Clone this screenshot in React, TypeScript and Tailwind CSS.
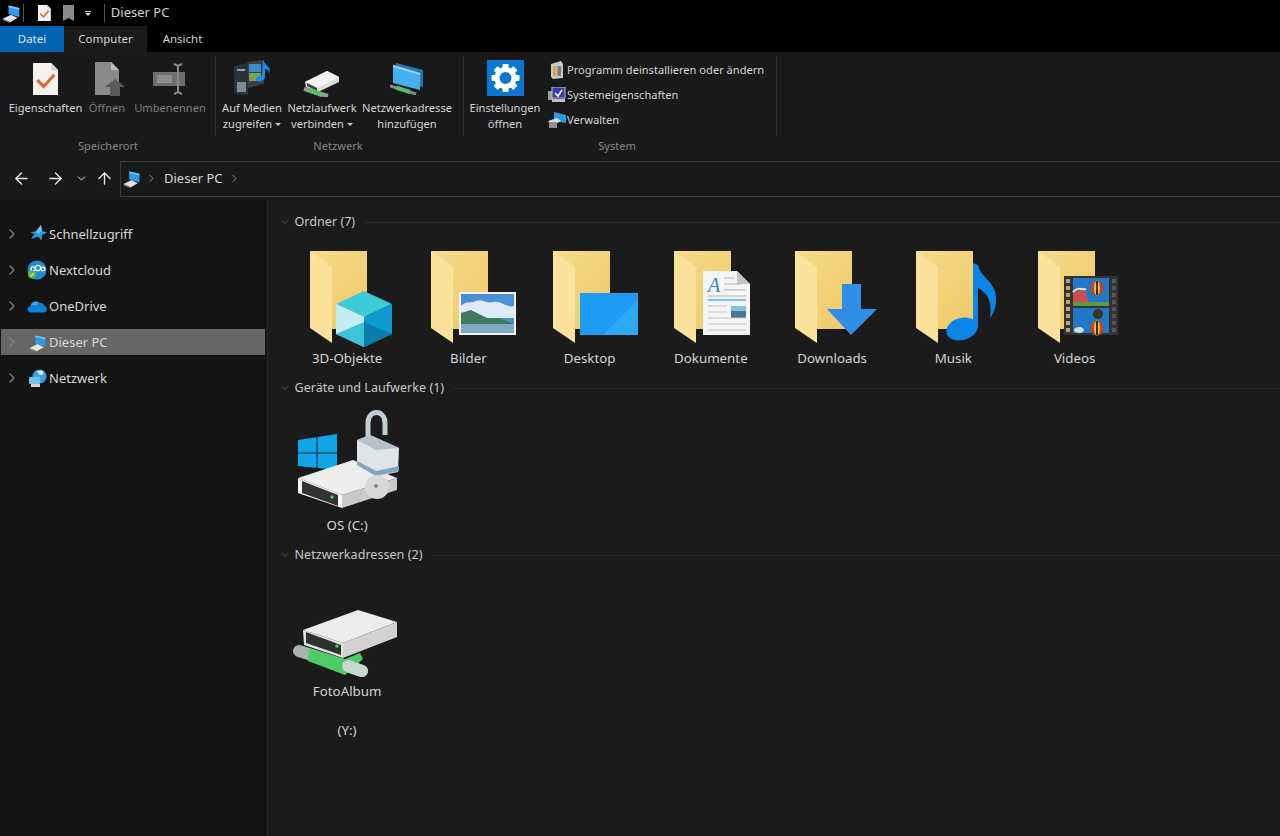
import { ArrowLeft, ArrowRight, ArrowUp, ChevronDown, ChevronRight } from 'lucide-react'
import type { ReactNode } from 'react'

function PcIcon({ size = 22 }: { size?: number }) {
  return (
    <svg width={size} height={size} viewBox="0 0 24 24">
      <polygon points="9,3 22,6 22,17 9,13" fill="#2f9be8" />
      <polygon points="9,3 22,6 22,8 9,5" fill="#7cc7f5" />
      <polygon points="2,19 12,14 20,18 11,23" fill="#e2e2e2" />
      <polygon points="2,19 11,23 11,24 2,20.5" fill="#8f8f8f" />
    </svg>
  )
}

function FileCheckIcon({ size = 32 }: { size?: number }) {
  return (
    <svg width={size * 0.8} height={size} viewBox="0 0 24 30">
      <polygon points="0,0 17,0 24,7 24,30 0,30" fill="#f6f3ee" />
      <polygon points="17,0 24,7 17,7" fill="#d4d4d4" />
      <polyline points="4,16 10,22 20,11" fill="none" stroke="#dd6b33" strokeWidth="3" />
    </svg>
  )
}

function OpenFileIcon() {
  return (
    <svg width="30" height="34" viewBox="0 0 30 34" className="ml-[6px]">
      <polygon points="0,0 16,0 24,8 24,33 0,33" fill="#8a8a8a" />
      <polygon points="16,0 24,8 16,8" fill="#bcbcbc" />
      <polygon points="20,17 30,25 25,25 25,34 15,34 15,25 10,25" fill="#5b5b5b" />
    </svg>
  )
}

function RenameIcon() {
  return (
    <svg width="34" height="32" viewBox="0 0 34 32">
      <rect x="0" y="9" width="32" height="14" fill="#6e6e6e" />
      <rect x="4" y="12" width="15" height="8" fill="#8d8d8d" />
      <path d="M21 1 L25 3 L29 1 M25 3 V29 M21 31 L25 29 L29 31" fill="none" stroke="#8a8a8a" strokeWidth="2" />
    </svg>
  )
}

function MediaIcon() {
  return (
    <svg width="38" height="36" viewBox="0 0 38 36" className="ml-[2px] mt-[-2px]">
      <polygon points="0,6 14,3 14,35 4,35 0,32" fill="#2c3238" />
      <rect x="3" y="9" width="8" height="2" fill="#8fa3b5" />
      <rect x="3" y="22" width="9" height="10" fill="#7f8b97" />
      <polygon points="12,2 30,0 30,24 14,28 14,3" fill="#3a3f44" />
      <rect x="15" y="4" width="12" height="8" fill="#3b8bd1" />
      <rect x="15" y="13" width="12" height="8" fill="#7da653" />
      <path d="M29 0 C31 6 38 6 35 14 C35 10 33 9 31 9 L31 17 C31 21 24 23 22 20 C21 17 25 15 28 16 Z" fill="#1b8fe8" />
    </svg>
  )
}

function SmallNetDrive() {
  return (
    <svg width="38" height="28" viewBox="0 0 38 28" className="mt-[7px]">
      <polygon points="2,13 24,2 36,8 36,13 15,23 3,18" fill="#dcdcdc" />
      <polygon points="2,13 15,19 36,8 24,2" fill="#f2f2f2" />
      <polygon points="4,14 14,19 14,22 4,17" fill="#3d3d3d" />
      <line x1="1" y1="20" x2="25" y2="27" stroke="#9a9a9a" strokeWidth="4" />
      <line x1="6" y1="21" x2="20" y2="26" stroke="#55c267" strokeWidth="5" />
    </svg>
  )
}

function NetAddressIcon() {
  return (
    <svg width="36" height="32" viewBox="0 0 36 32" className="ml-[2px]">
      <polygon points="6,0 33,7 33,24 6,17" fill="#2878b8" />
      <polygon points="3,2 30,10 30,27 3,20" fill="#45b0f0" />
      <polygon points="3,2 30,10 30,12 3,4" fill="#9ed8fa" />
      <line x1="0" y1="23" x2="26" y2="31" stroke="#8a8a8a" strokeWidth="3" />
      <line x1="6" y1="24.5" x2="20" y2="29" stroke="#55c267" strokeWidth="4" />
    </svg>
  )
}

function SettingsIcon() {
  return (
    <svg width="37" height="36" viewBox="0 0 37 36" className="mt-[-2px]">
      <rect width="37" height="36" fill="#0a78d0" />
      <g fill="#fff">
        {[0, 45, 90, 135, 180, 225, 270, 315].map((a) => (
          <rect key={a} x="15.5" y="4" width="6" height="7" rx="1" transform={`rotate(${a} 18.5 18)`} />
        ))}
      </g>
      <circle cx="18.5" cy="18" r="8.5" fill="none" stroke="#fff" strokeWidth="5" />
    </svg>
  )
}

function ProgramIcon() {
  return (
    <svg width="16" height="18" viewBox="0 0 16 18">
      <polygon points="2,3 12,0 14,3 14,17 4,18 2,16" fill="#c9c9c9" />
      <rect x="4" y="5" width="3.5" height="10" fill="#e3a04f" />
      <rect x="8.5" y="5" width="3.5" height="10" fill="#6f7b88" />
    </svg>
  )
}

function SysPropsIcon() {
  return (
    <svg width="18" height="16" viewBox="0 0 18 16">
      <rect x="0" y="4" width="5" height="9" fill="#a0a0a0" />
      <rect x="4" y="0" width="13" height="11" fill="#2f3fa8" stroke="#c5c5c5" />
      <polyline points="7,6 10,9 14,3" fill="none" stroke="#fff" strokeWidth="1.5" />
      <rect x="4" y="12" width="13" height="3" fill="#c0c0c0" />
    </svg>
  )
}

function ManageIcon() {
  return (
    <svg width="19" height="16" viewBox="0 0 19 16">
      <polygon points="6,0 18,3 18,11 6,9" fill="#2f9be8" />
      <polygon points="0,9 9,6 13,9 4,14" fill="#d8d8d8" />
      <rect x="1" y="10" width="8" height="6" fill="#8f8f8f" />
    </svg>
  )
}

function StarIcon() {
  return (
    <svg width="18" height="18" viewBox="0 0 18 18">
      <polygon points="12,0 13,6 18,7.5 13,10 12.5,15.5 9,11.5 2,14 5.5,9 1,7 7,6.5" fill="#2b9be8" />
      <polygon points="12,0 13,6 9,9 7,6.5" fill="#72c1f3" />
    </svg>
  )
}

function NextcloudIcon() {
  return (
    <svg width="20" height="20" viewBox="0 0 20 20">
      <circle cx="10" cy="10" r="9.5" fill="#1d8fd6" />
      <circle cx="6" cy="9" r="2.2" fill="none" stroke="#fff" strokeWidth="1.2" />
      <circle cx="11" cy="8" r="2.6" fill="none" stroke="#fff" strokeWidth="1.2" />
      <circle cx="16" cy="9" r="1.8" fill="none" stroke="#fff" strokeWidth="1.2" />
      <circle cx="5" cy="14.5" r="4" fill="#63b33c" />
      <polyline points="3,14.5 4.6,16 7,13" fill="none" stroke="#fff" strokeWidth="1" />
    </svg>
  )
}

function OneDriveIcon() {
  return (
    <svg width="20" height="14" viewBox="0 0 20 14">
      <path d="M4 13.5 C0 13.5 -1 8 3.5 7 C4.5 2.5 9.5 1 12.5 4 C15 3 17 5 17 6.5 C20.5 7 21 13.5 17 13.5 Z" fill="#0f7fd8" />
      <path d="M3.5 7 C4.5 2.5 9.5 1 12.5 4 C11 4.5 10 5.5 9.5 6.5 C7.5 5.5 5 6 3.5 7 Z" fill="#36a4ee" />
    </svg>
  )
}

function GlobeIcon() {
  return (
    <svg width="18" height="18" viewBox="0 0 18 18">
      <circle cx="10.5" cy="7.5" r="7" fill="#3f9fe4" />
      <path d="M7 2 C10 3 9 6 12 6 C15 6 15 3 13 1.5 Z" fill="#cfe9fa" />
      <rect x="0" y="8" width="11" height="7" rx="1" fill="#75c0ef" />
      <rect x="2" y="15" width="9" height="3" fill="#d5d5d5" />
    </svg>
  )
}

function Folder() {
  return (
    <>
      <defs>
        <linearGradient id="folderBack" x1="0" y1="0" x2="1" y2="1">
          <stop offset="0" stopColor="#f6dc8c" />
          <stop offset="1" stopColor="#eec866" />
        </linearGradient>
      </defs>
      <polygon points="10,1 67,1 67,79 32,79" fill="url(#folderBack)" />
      <polygon points="10,1 32,17 32,93 10,78" fill="#fde29b" />
    </>
  )
}

function Cube() {
  return (
    <>
      <polygon points="64,41 92,54 64,67 36,54" fill="#3dcbd8" />
      <polygon points="36,54 64,67 64,97 36,84" fill="#c5eef3" />
      <polygon points="92,54 64,67 64,97 92,84" fill="#0d9bd2" />
      <polygon points="36,84 64,72 64,97" fill="#3cc4d6" />
      <polygon points="92,84 64,72 64,97" fill="#0a7cae" />
    </>
  )
}

function Picture() {
  return (
    <>
      <rect x="38" y="42" width="57" height="43" fill="#f2f2f2" />
      <rect x="40" y="44" width="53" height="39" fill="#4a90d4" />
      <path d="M40 56 C46 50 50 54 55 51 C60 48 66 54 72 52 C80 50 86 58 93 56 V68 H40 Z" fill="#dcebf5" />
      <polygon points="40,63 50,60 66,68 78,68 93,74 40,74" fill="#3f7a5c" />
      <rect x="40" y="74" width="53" height="9" fill="#7fa8c4" />
    </>
  )
}

function Desktop() {
  return (
    <>
      <rect x="37" y="43" width="58" height="42" fill="#1e9bf5" />
      <polygon points="60,85 95,50 95,85" fill="#2fa8f8" />
    </>
  )
}

function DocumentOverlay() {
  return (
    <>
      <polygon points="39,21 73,21 86,34 86,85 39,85" fill="#f5f5f5" />
      <polygon points="73,21 86,34 73,34" fill="#c6c6c6" />
      <text x="44" y="42" fontFamily="Liberation Serif, serif" fontStyle="italic" fontSize="20" fill="#3a83c8">A</text>
      <path d="M60 28 H71 M60 34 H78 M60 40 H82 M44 46 H82" stroke="#b5b5b5" strokeWidth="1" />
      <line x1="44" y1="50" x2="82" y2="50" stroke="#62a8de" strokeWidth="1.5" />
      <rect x="67" y="56" width="15" height="12" fill="#47758c" />
      <rect x="67" y="56" width="15" height="5" fill="#82c3e8" />
      <path d="M44 56 H63 M44 62 H63 M44 68 H82 M44 74 H82 M44 80 H82" stroke="#c4c4c4" strokeWidth="1" />
    </>
  )
}

function DownloadArrow() {
  return <polygon points="57,34 76,34 76,59 92,59 66,85 42,59 57,59" fill="#2f8fe6" />
}

function MusicNote() {
  return (
    <>
      <ellipse cx="56" cy="79" rx="16" ry="11" fill="#0d84e8" transform="rotate(-15 56 79)" />
      <path d="M67 13 L72 15 C74 28 92 32 90 52 C89 60 87 64 84 68 C86 56 84 44 72 38 L72 78 L67 78 Z" fill="#0d84e8" />
    </>
  )
}

function Balloon({ cx, cy }: { cx: number; cy: number }) {
  return (
    <>
      <ellipse cx={cx} cy={cy} rx="6.5" ry="7.5" fill="#c2441e" />
      <ellipse cx={cx} cy={cy} rx="3" ry="7.5" fill="#e8c23a" />
      <rect x={cx - 1} y={cy - 7} width="2" height="14" fill="#3c2a18" />
    </>
  )
}

function FilmStrip() {
  const holes = [29, 36, 43, 50, 57, 64, 71, 78]
  return (
    <>
      <rect x="36" y="26" width="54" height="59" fill="#333" />
      {holes.map((y) => (
        <g key={y}>
          <rect x={38} y={y} width={4} height={4} fill="#b9a469" />
          <rect x={84} y={y} width={4} height={4} fill="#555" />
        </g>
      ))}
      <rect x="45" y="28" width="36" height="28" fill="#1f78c8" />
      <rect x="45" y="58" width="36" height="25" fill="#1f78c8" />
      <path d="M45 44 C50 38 54 42 58 41 C58 46 60 50 62 52 L62 56 H45 Z" fill="#c94f4f" />
      <path d="M45 42 C50 36 54 40 58 39" fill="none" stroke="#e8e2b0" strokeWidth="2" />
      <rect x="45" y="52" width="36" height="4" fill="#5d9b46" />
      <Balloon cx={69} cy={38} />
      <ellipse cx="70" cy="64" rx="5" ry="5" fill="#41301f" />
      <Balloon cx={69} cy={78} />
      <ellipse cx="51" cy="80" rx="5" ry="3" fill="#dcdcdc" />
    </>
  )
}

function FolderTile({ children }: { children: ReactNode }) {
  return (
    <svg width="100" height="100" viewBox="0 0 100 100" className="ml-[13.5px] block">
      <Folder />
      {children}
    </svg>
  )
}

function DriveC() {
  return (
    <svg width="120" height="112" viewBox="290 405 120 112" className="ml-[3.5px] block">
      <polygon points="298,440 337,434 337,470 298,466" fill="#0fa6e8" />
      <path d="M317 437 V469 M298 453 H337" stroke="#0b2c44" strokeWidth="1.2" />
      <polygon points="298,478 353,460 397,478 342,495" fill="#ededed" />
      <polygon points="342,495 397,478 397,490 342,508" fill="#c9c9c9" />
      <polygon points="298,478 342,495 342,508 298,493" fill="#f4f4f4" />
      <polygon points="302,481 338,495 338,506 302,493" fill="#333" />
      <circle cx="332" cy="497" r="1.8" fill="#39d353" />
      <path d="M368 437 V423 C368 409 385 409 385 423 V435" fill="none" stroke="#c3ccd1" strokeWidth="5" />
      <polygon points="357,440 370,435 399,448 398,472 373,477 357,463" fill="#dfe4e7" />
      <polygon points="357,440 370,435 399,448 376,450" fill="#b4c2ca" />
      <polygon points="357,461 376,471 399,466 399,471 376,476 357,465" fill="#7fa6bd" />
      <circle cx="377" cy="487" r="12" fill="#d8d8d8" />
      <circle cx="376" cy="486" r="2" fill="#888" />
    </svg>
  )
}

function DriveY() {
  return (
    <svg width="120" height="83" viewBox="285 600 120 83" className="ml-[-1.5px] block">
      <polygon points="303,630 358,610 397,622 343,643" fill="#ececec" />
      <polygon points="343,643 397,622 397,637 343,658" fill="#d2d2d2" />
      <polygon points="303,630 343,643 343,658 304,645" fill="#e3e3e3" />
      <polygon points="306,632 341,645 341,655 306,643" fill="#303030" />
      <circle cx="337" cy="646" r="1.8" fill="#39d353" />
      <line x1="299" y1="651" x2="362" y2="671" stroke="#a9b3ad" strokeWidth="12" strokeLinecap="round" />
      <polygon points="309,648 345,659 360,653 363,659 345,675 308,661" fill="#4fcb68" />
      <line x1="348" y1="666" x2="362" y2="671" stroke="#c5d8cb" strokeWidth="12" strokeLinecap="round" />
    </svg>
  )
}

function SectionHeader({ title }: { title: string }) {
  return (
    <div className="flex h-[20px] items-center text-[12.6px]">
      <ChevronDown size={12} strokeWidth={1} className="ml-[-8px] text-[#777]" />
      <span className="ml-[4px] text-[#c8c8c8]">{title}</span>
      <div className="ml-[10px] h-px flex-1 bg-[#2b2b2b]" />
    </div>
  )
}

function Tile({ label, children }: { label: string; children: ReactNode }) {
  return (
    <div className="w-[121.25px]">
      {children}
      <div className="h-[16px] text-center text-[13.3px] leading-[16px] text-[#d4d4d4]">{label}</div>
    </div>
  )
}

function RibbonButton({
  width,
  lines,
  icon,
  disabled,
  menu,
}: {
  width: string
  lines: string[]
  icon: ReactNode
  disabled?: boolean
  menu?: boolean
}) {
  return (
    <div className={`flex flex-col items-center ${width} ${disabled ? 'text-[#7d7d7d]' : 'text-[#d6d6d6]'}`}>
      <div className="flex h-[42px] items-center justify-center">{icon}</div>
      {lines.map((l, i) => (
        <div key={l} className="flex h-[16px] items-center whitespace-nowrap leading-[16px]">
          {l}
          {menu && i === 1 && <span className="ml-[3px] mt-[1px] border-x-[3px] border-t-[3px] border-x-transparent border-t-[#ccc]" />}
        </div>
      ))}
    </div>
  )
}

function SideRow({ label, icon, selected }: { label: string; icon: ReactNode; selected?: boolean }) {
  return (
    <div className={`ml-px flex h-[26px] w-[264px] items-center ${selected ? 'bg-[#666666]' : ''}`}>
      <ChevronRight size={16} strokeWidth={2} className="ml-[3px] text-[#808080]" />
      <div className="flex w-[29px] justify-end pr-[2px]">{icon}</div>
      <span className="pt-px text-[13px] text-[#d8d8d8]">{label}</span>
    </div>
  )
}

export default function App() {
  return (
    <div className="flex h-[836px] w-[1280px] flex-col overflow-hidden bg-[#1b1b1b] font-['Noto_Sans',sans-serif] text-[11.1px]">
      {/* Titelleiste */}
      <div className="flex h-[26px] items-center bg-black text-[13px] text-[#d2d2d2]">
        <div className="ml-px flex"><PcIcon size={20} /></div>
        <div className="ml-[2px] h-[18px] w-px bg-[#555]" />
        <div className="ml-[14px] flex"><FileCheckIcon size={16} /></div>
        <svg width="11" height="16" viewBox="0 0 11 16" className="ml-[12px]">
          <polygon points="0,0 11,0 11,16 5.5,13 0,16" fill="#8a8a8a" />
        </svg>
        <div className="ml-[11px] flex flex-col items-center gap-[1px]">
          <div className="h-px w-[6px] bg-[#ccc]" />
          <div className="border-x-[3px] border-t-[3px] border-x-transparent border-t-[#ccc]" />
        </div>
        <div className="ml-[13px] h-[18px] w-px bg-[#555]" />
        <span className="ml-[6px]">Dieser PC</span>
      </div>

      {/* Tabs */}
      <div className="flex h-[26px] bg-black text-[11.5px] text-[#d2d2d2]">
        <div className="flex w-[64px] items-center justify-center bg-[#0063b1] text-[#dfeaf5]">Datei</div>
        <div className="flex w-[83px] items-center justify-center bg-[#1a1a1a]">Computer</div>
        <div className="flex w-[71px] items-center justify-center">Ansicht</div>
      </div>

      {/* Ribbon */}
      <div className="flex h-[105px] bg-[#191919]">
        <div className="flex w-[216px] flex-col">
          <div className="mt-[3px] flex h-[81px] border-r border-[#2e2e2e] pl-[7px] pt-[3px]">
            <RibbonButton width="w-[77px]" lines={['Eigenschaften']} icon={<FileCheckIcon />} />
            <RibbonButton width="w-[46px]" lines={['Öffnen']} icon={<OpenFileIcon />} disabled />
            <RibbonButton width="w-[80px]" lines={['Umbenennen']} icon={<RenameIcon />} disabled />
          </div>
          <div className="mt-[4px] text-center leading-[12px] text-[#858585]">Speicherort</div>
        </div>
        <div className="flex w-[248px] flex-col">
          <div className="mt-[3px] flex h-[81px] border-r border-[#2e2e2e] pl-[2px] pt-[3px]">
            <RibbonButton width="w-[68px]" lines={['Auf Medien', 'zugreifen']} icon={<MediaIcon />} menu />
            <RibbonButton width="w-[72px]" lines={['Netzlaufwerk', 'verbinden']} icon={<SmallNetDrive />} menu />
            <RibbonButton width="w-[98px]" lines={['Netzwerkadresse', 'hinzufügen']} icon={<NetAddressIcon />} />
          </div>
          <div className="mt-[4px] pr-[4px] text-center leading-[12px] text-[#858585]">Netzwerk</div>
        </div>
        <div className="flex w-[313px] flex-col">
          <div className="mt-[3px] flex h-[81px] border-r border-[#2e2e2e] pl-[4px] pt-[3px]">
            <RibbonButton width="w-[74px]" lines={['Einstellungen', 'öffnen']} icon={<SettingsIcon />} />
            <div className="ml-[5px] flex flex-col gap-[5px] pt-[2px] text-[#d6d6d6]">
              <div className="flex h-[20px] items-center whitespace-nowrap"><div className="flex w-[20px] justify-center"><ProgramIcon /></div>Programm deinstallieren oder ändern</div>
              <div className="flex h-[20px] items-center"><div className="flex w-[20px] justify-center"><SysPropsIcon /></div>Systemeigenschaften</div>
              <div className="flex h-[20px] items-center"><div className="flex w-[20px] justify-center"><ManageIcon /></div>Verwalten</div>
            </div>
          </div>
          <div className="mt-[4px] pr-[7px] text-center leading-[12px] text-[#858585]">System</div>
        </div>
      </div>

      {/* Adressleiste */}
      <div className="flex h-[43px] items-center bg-[#191919] text-[13px] text-[#d6d6d6]">
        <ArrowLeft size={19} strokeWidth={1.7} className="ml-[12px] text-[#ececec]" />
        <ArrowRight size={19} strokeWidth={1.7} className="ml-[15px] text-[#ececec]" />
        <ChevronDown size={13} strokeWidth={1.8} className="ml-[10px] text-[#e0e0e0]" />
        <ArrowUp size={19} strokeWidth={1.7} className="ml-[7px] text-[#ececec]" />
        <div className="ml-[6px] flex h-[36px] flex-1 items-center border border-r-0 border-[#383838]">
          <div className="ml-px flex"><PcIcon size={19} /></div>
          <ChevronRight size={13} strokeWidth={1.8} className="ml-[4px] text-[#8a8a8a]" />
          <span className="ml-[6px]">Dieser PC</span>
          <ChevronRight size={13} strokeWidth={1.8} className="ml-[5px] text-[#8a8a8a]" />
        </div>
      </div>

      <div className="flex flex-1">
        {/* Navigation */}
        <div className="flex w-[268px] flex-col gap-[10.1px] border-r border-[#2a2a2a] bg-[#141414] pt-[21px]">
          <SideRow label="Schnellzugriff" icon={<StarIcon />} />
          <SideRow label="Nextcloud" icon={<NextcloudIcon />} />
          <SideRow label="OneDrive" icon={<OneDriveIcon />} />
          <SideRow label="Dieser PC" icon={<PcIcon size={19} />} selected />
          <SideRow label="Netzwerk" icon={<GlobeIcon />} />
        </div>

        {/* Inhalt */}
        <div className="flex-1 pl-[18.5px] pt-[12px]">
          <SectionHeader title="Ordner (7)" />
          <div className="mt-[18px] flex">
            <Tile label="3D-Objekte"><FolderTile><Cube /></FolderTile></Tile>
            <Tile label="Bilder"><FolderTile><Picture /></FolderTile></Tile>
            <Tile label="Desktop"><FolderTile><Desktop /></FolderTile></Tile>
            <Tile label="Dokumente"><FolderTile><DocumentOverlay /></FolderTile></Tile>
            <Tile label="Downloads"><FolderTile><DownloadArrow /></FolderTile></Tile>
            <Tile label="Musik"><FolderTile><MusicNote /></FolderTile></Tile>
            <Tile label="Videos"><FolderTile><FilmStrip /></FolderTile></Tile>
          </div>

          <div className="mt-[12px]"><SectionHeader title="Geräte und Laufwerke (1)" /></div>
          <div className="mt-[7px]">
            <Tile label="OS (C:)"><DriveC /></Tile>
          </div>

          <div className="mt-[12px]"><SectionHeader title="Netzwerkadressen (2)" /></div>
          <div className="mt-[35px]">
            <Tile label="FotoAlbum"><DriveY /></Tile>
            <div className="mt-[23px] h-[16px] w-[121px] text-center text-[13.3px] leading-[16px] text-[#d4d4d4]">(Y:)</div>
          </div>
        </div>
      </div>
    </div>
  )
}
